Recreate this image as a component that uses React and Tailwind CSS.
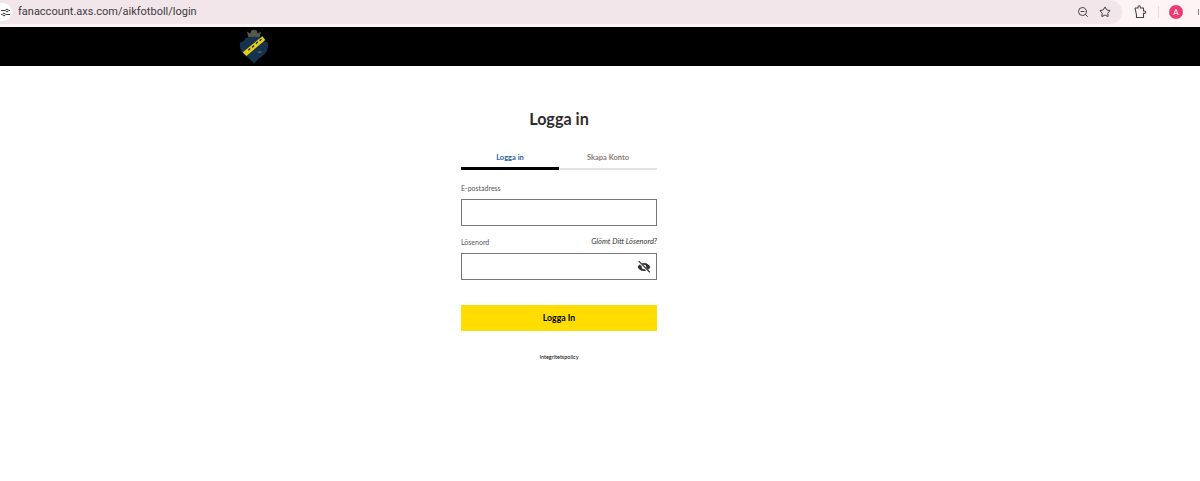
import React from "react";
import { ZoomOut, Star } from "lucide-react";

const Logo = () => (
  <svg width="30" height="37" viewBox="0 0 32 38">
    <path d="M10 9 L8.500 3 L12 5 L13 2 L16 1 L19 2 L20 5 L23.500 3 L22 9 Z" fill="#55584a" />
    <path d="M7 10 Q16 7 25 10 L27 13 L31 15 Q32 24 25 29 Q20 32 16 37 Q12 32 7 29 Q0 24 1 15 L5 13 Z" fill="#17324d" />
    <path d="M4 25 L25 8 L28 12 L8 29 Z" fill="#e9cf12" />
    <path d="M10 23 L12 21 M14 20 L16 18 M18 16 L20 14 M22 13 L24 11" stroke="#17324d" strokeWidth="1.500" />
    <path d="M20 25 h4" stroke="#55676f" strokeWidth="1.500" />
  </svg>
);

const EyeOff = () => (
  <svg width="14" height="14" viewBox="0 0 24 24" fill="#333">
    <path d="M12 5C7 5 2.700 8 1 12c1.700 4 6 7 11 7s9.300-3 11-7c-1.700-4-6-7-11-7zm0 11a4 4 0 1 1 0-8 4 4 0 0 1 0 8z" />
    <path d="M3 3l18 18" stroke="#fff" strokeWidth="4" />
    <path d="M3 2l19 19" stroke="#333" strokeWidth="2" />
  </svg>
);

const Extensions = () => (
  <svg width="14" height="14" viewBox="0 0 14 14" fill="none" stroke="#444" strokeWidth="1.100">
    <path d="M2 3h3V2a1.200 1.200 0 0 1 2.400 0v1h3.100v3h1a1.200 1.200 0 0 1 0 2.400h-1v4.100H3.500V10" />
    <path d="M2 3l1.500 7" />
  </svg>
);

const App = () => {
  return (
    <div className="h-[481px] bg-white font-['Lato','Liberation_Sans',sans-serif] overflow-hidden">
      {/* browser bar */}
      <div className="h-[27px] bg-[#fdf5f5] flex items-start">
        <div className="h-[24px] flex-1 bg-[#f2e6ea] rounded-r-[12px] flex items-center pr-[11px]">
          <div className="w-[13px] h-[18px] -ml-[1px] bg-white rounded-r-full flex items-center justify-center">
            <svg width="9" height="9" viewBox="0 0 9 9" stroke="#444" fill="none">
              <path d="M0 2.500h4M8 2.500h1M0 6.500h1M5 6.500h4" />
              <circle cx="6" cy="2.500" r="1.300" />
              <circle cx="3" cy="6.500" r="1.300" />
            </svg>
          </div>
          <span className="ml-[6px] text-[11px] font-['Roboto',sans-serif] text-[#3c3c40]">
            fanaccount.axs.com/aikfotboll/login
          </span>
          <ZoomOut size={12} className="ml-auto text-[#444]" strokeWidth={2} />
          <Star size={12} className="ml-[10px] text-[#333]" strokeWidth={2} />
        </div>
        <div className="w-[78px] h-[24px] flex items-center pl-[11px] relative">
          <Extensions />
          <div className="w-px h-[12px] bg-[#f0d5dc] ml-[11px]" />
          <div className="ml-[10px] w-[14px] h-[14px] rounded-full bg-[#ee3a72] text-white text-[8px] flex items-center justify-center">
            A
          </div>
          <span className="absolute right-0 top-[9px] w-[2px] h-[6px] border-l border-dashed border-[#888]" />
        </div>
      </div>

      {/* club header */}
      <div className="h-[39px] bg-black flex items-center pl-[239px]">
        <Logo />
      </div>

      {/* login form */}
      <div className="w-[196px] ml-[461px] pt-[41px]">
        <h1 className="text-[16.200px] leading-[24px] font-bold text-[#2d2d2d] text-center">Logga in</h1>

        <div className="flex mt-[20px] text-[7.500px] font-bold">
          <div className="w-1/2 h-[19px] pt-[1px] text-center text-[#1f5ea8] border-b-[3px] border-black">Logga in</div>
          <div className="w-1/2 h-[19px] pt-[1px] text-center text-[#8a7a72] border-b-[2px] border-[#e4e4e4]">Skapa Konto</div>
        </div>

        <label className="block mt-[12px] text-[7px] leading-[12px] text-[#555]">E-postadress</label>
        <div className="mt-[5px] h-[27px] border border-[#777]" />

        <div className="mt-[10px] flex justify-between items-center text-[7px] leading-[12px]">
          <span className="text-[#555]">Lösenord</span>
          <span className="italic text-[7.500px] text-[#333]">Glömt Ditt Lösenord?</span>
        </div>
        <div className="mt-[5px] h-[27px] border border-[#777] flex items-center justify-end pr-[5px]">
          <EyeOff />
        </div>

        <button className="mt-[25px] w-full h-[26px] bg-[#ffdd00] text-[8.700px] font-bold text-black">Logga In</button>

        <p className="mt-[21px] text-center text-[5.500px] leading-[10px] text-black">Integritetspolicy</p>
      </div>
    </div>
  );
};

export default App;
